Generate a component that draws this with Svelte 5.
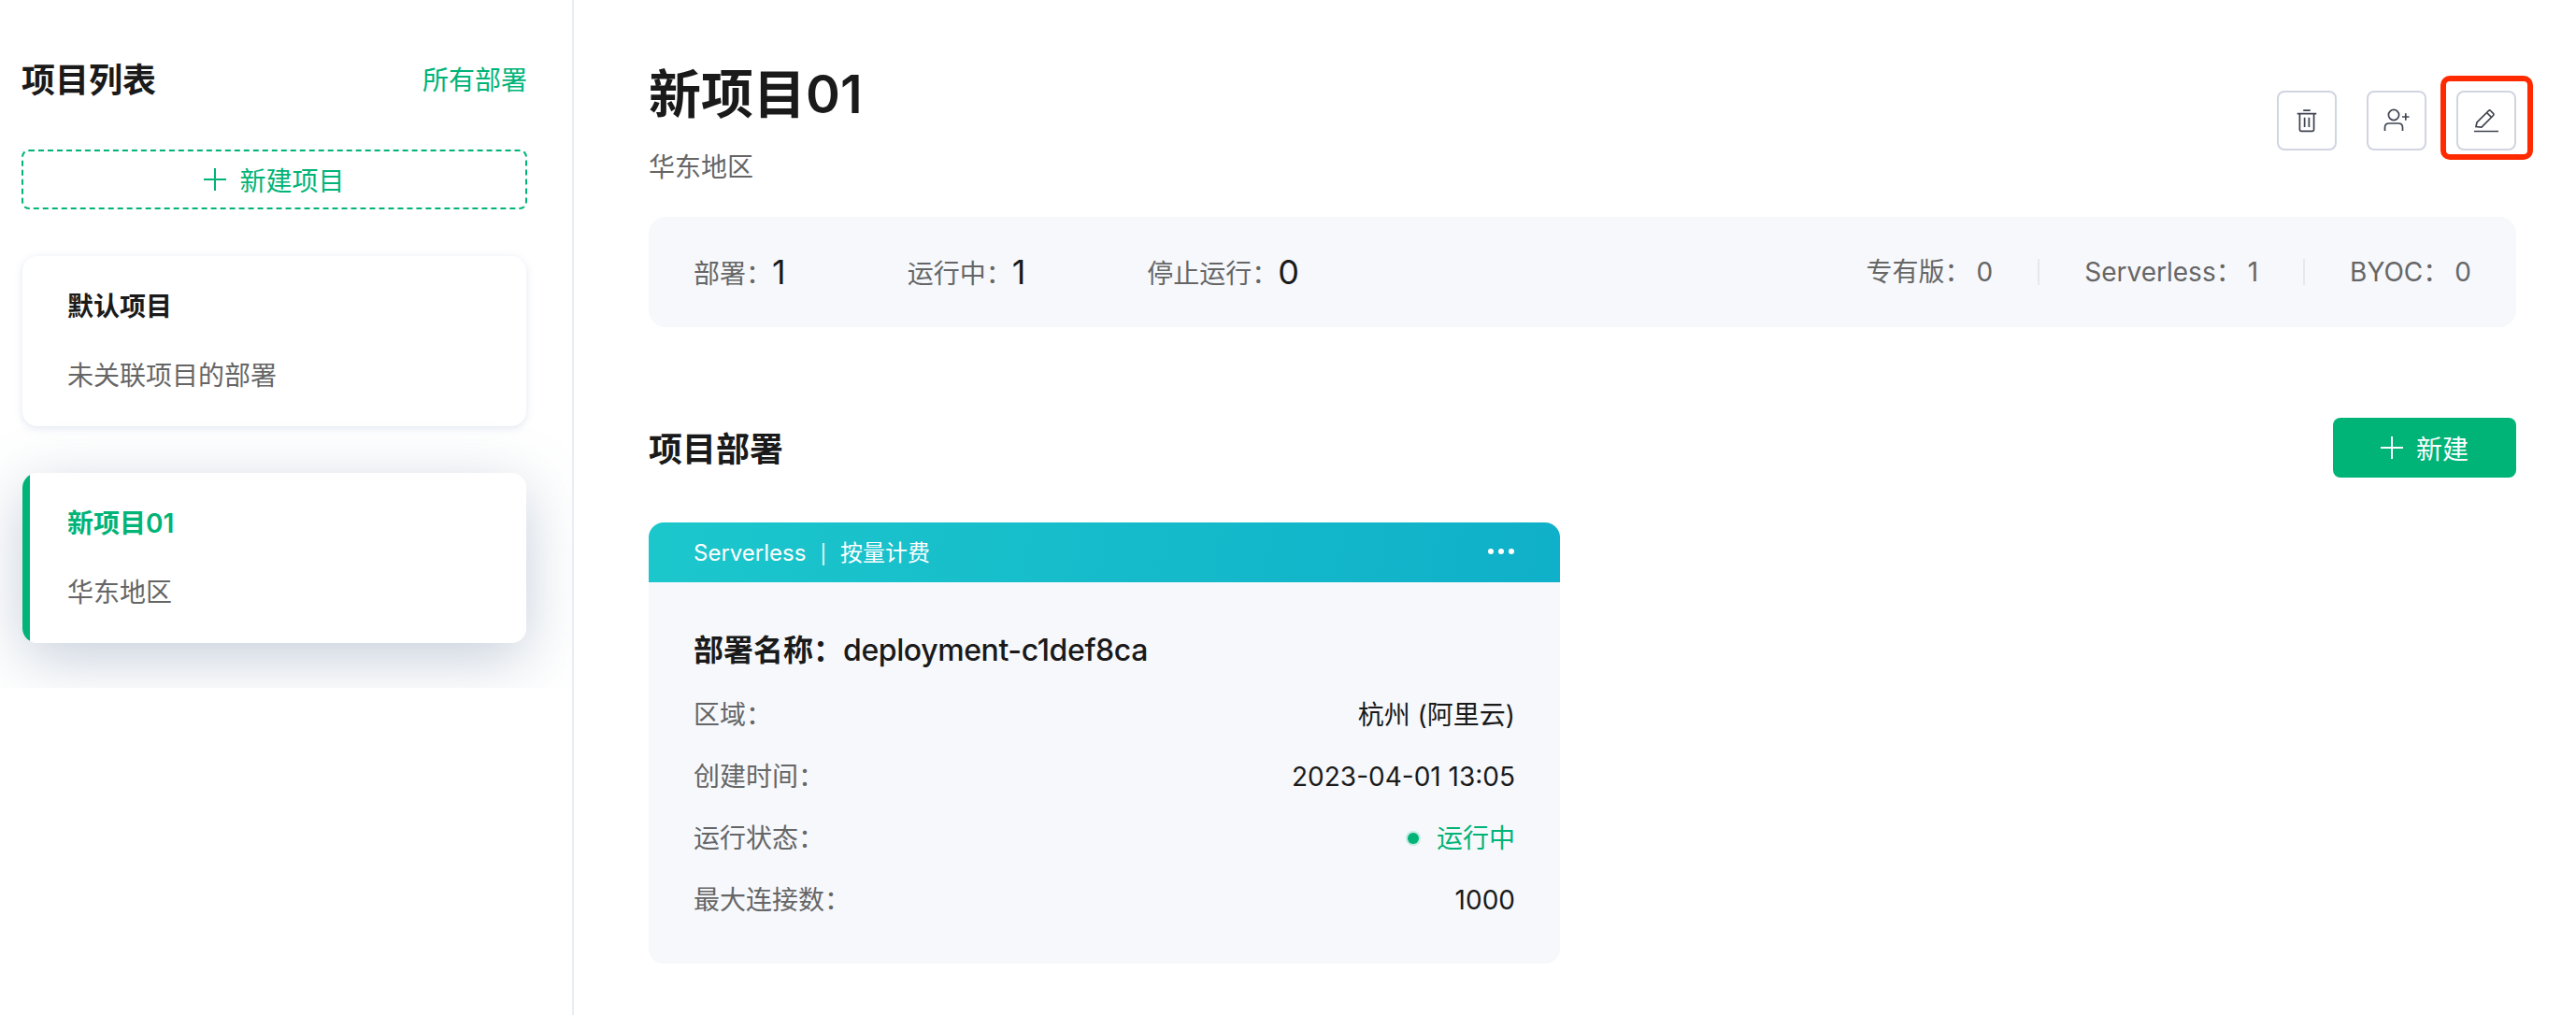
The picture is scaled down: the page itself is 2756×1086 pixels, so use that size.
<script lang="ts">
  const stats = [
    { label: '部署：', value: 1 },
    { label: '运行中：', value: 1 },
    { label: '停止运行：', value: 0 }
  ];
  const kinds = [
    { label: '专有版：', value: 0 },
    { label: 'Serverless：', value: 1 },
    { label: 'BYOC：', value: 0 }
  ];
</script>

{#snippet plus()}
  <svg class="plus" viewBox="0 0 24 24" width="24" height="24" fill="none" stroke="currentColor" stroke-width="2">
    <path d="M12 0v24M0 12h24" />
  </svg>
{/snippet}

<div class="page">
  <aside class="sidebar">
    <div class="side-head">
      <h2>项目列表</h2>
      <span class="link">所有部署</span>
    </div>
    <button class="add-project">{@render plus()}新建项目</button>
    <div class="project-list">
      <div class="project">
        <div class="project-name">默认项目</div>
        <div class="project-desc">未关联项目的部署</div>
      </div>
      <div class="project active">
        <div class="project-name">新项目01</div>
        <div class="project-desc">华东地区</div>
      </div>
    </div>
  </aside>

  <main class="content">
    <header class="top">
      <div>
        <h1>新项目01</h1>
        <div class="region">华东地区</div>
      </div>
      <div class="actions">
        <button class="icon-btn" aria-label="删除">
          <svg viewBox="0 0 24 24" width="26" height="26" fill="none" stroke="#3f4450" stroke-width="1.6">
            <path d="M2.5 5.2h19M8.5 2h7M5 5.2V21q0 1.5 1.500 1.500h11q1.500 0 1.500-1.500V5.200M9.800 9v9.500M14.200 9v9.500" />
          </svg>
        </button>
        <button class="icon-btn" aria-label="添加成员">
          <svg viewBox="0 0 28 28" width="28" height="28" fill="none" stroke="#3f4450" stroke-width="1.700">
            <circle cx="11" cy="8" r="5.600" />
            <path d="M1.500 25v-3.500q0-4.500 4.500-4.500h10q4.500 0 4.500 4.500V25M20 10h7.500M23.800 6.200v7.500" />
          </svg>
        </button>
        <div class="edit-wrap">
          <button class="icon-btn" aria-label="编辑">
            <svg viewBox="0 0 28 28" width="28" height="28" fill="none" stroke="#3f4450" stroke-width="1.700">
              <path d="M3 20.500 4 16 16.500 3.500a1.500 1.500 0 0 1 2.100 0l2.900 2.900a1.500 1.500 0 0 1 0 2.100L9 21Z" />
              <path d="M14.500 5.500l5 5M1 25.500h26" />
            </svg>
          </button>
          <span class="highlight"></span>
        </div>
      </div>
    </header>

    <section class="summary">
      <div class="stats">
        {#each stats as s}
          <div class="stat"><span class="stat-label">{s.label}</span><span class="stat-value">{s.value}</span></div>
        {/each}
      </div>
      <div class="kinds">
        {#each kinds as k}
          <div class="kind"><span>{k.label}</span><span class="kind-value">{k.value}</span></div>
        {/each}
      </div>
    </section>

    <div class="section-head">
      <h3>项目部署</h3>
      <button class="add-btn">{@render plus()}新建</button>
    </div>

    <article class="deploy">
      <div class="deploy-head">
        <span>Serverless<i>|</i>按量计费</span>
        <span class="dots"><b></b><b></b><b></b></span>
      </div>
      <div class="deploy-body">
        <div class="deploy-name">部署名称：<span>deployment-c1def8ca</span></div>
        <div class="row"><span class="key">区域：</span><span>杭州 (阿里云)</span></div>
        <div class="row"><span class="key">创建时间：</span><span>2023-04-01 13:05</span></div>
        <div class="row"><span class="key">运行状态：</span><span class="running"><em></em>运行中</span></div>
        <div class="row"><span class="key">最大连接数：</span><span>1000</span></div>
      </div>
    </article>
  </main>
</div>

<style>
  :global(body) {
    margin: 0;
    background: #fff;
    font-family: Inter, "Noto Sans CJK SC", sans-serif;
    color: #1a1a1a;
  }

  button { font-family: inherit; cursor: pointer; }
  h1, h2, h3 { margin: 0; }

  .page { display: flex; height: 1086px; overflow: hidden; }

  .sidebar {
    width: 612px;
    flex: none;
    box-sizing: content-box;
    border-right: 2px solid #e8edf5;
  }

  .side-head {
    display: flex;
    align-items: center;
    justify-content: space-between;
    height: 44px;
    margin: 62px 48px 0 23px;
  }

  .side-head h2 { font-size: 36px; font-weight: 600; position: relative; top: -1px; }
  .link { font-size: 28px; color: #00b377; }

  .add-project {
    display: flex;
    align-items: center;
    justify-content: center;
    gap: 14px;
    width: 541px;
    height: 64px;
    margin: 54px 0 0 23px;
    border: 2px dashed #00b377;
    border-radius: 8px;
    background: #fff;
    color: #00b377;
    font-size: 28px;
  }

  .project-list {
    display: flex;
    flex-direction: column;
    gap: 50px;
    height: 512px;
    padding: 50px 49px 0 24px;
    box-sizing: border-box;
    overflow: hidden;
  }

  .project {
    flex: none;
    height: 182px;
    padding: 34px 48px 0;
    box-sizing: border-box;
    border-radius: 16px;
    background: #fff;
    box-shadow: 0 2px 8px rgba(190, 200, 225, 0.45);
  }

  .project.active {
    background: linear-gradient(90deg, #00b377 8px, #fff 8px);
    box-shadow: 0 16px 64px rgba(120, 140, 170, 0.42);
  }

  .project-name { font-size: 28px; font-weight: 600; line-height: 40px; }
  .project-desc { margin-top: 34px; font-size: 28px; line-height: 40px; color: #666; }
  .active .project-name { color: #00b377; }

  .content { flex: 1; min-width: 0; padding: 0 64px 0 80px; }

  .top { display: flex; justify-content: space-between; height: 232px; }

  h1 { margin-top: 66px; font-size: 56px; line-height: 70px; font-weight: 600; }
  .region { margin-top: 23px; font-size: 28px; line-height: 40px; color: #666; }

  .actions { display: flex; gap: 32px; margin-top: 97px; }

  .icon-btn {
    display: flex;
    align-items: center;
    justify-content: center;
    width: 64px;
    height: 64px;
    padding: 0;
    border: 2px solid #d0d5e0;
    border-radius: 8px;
    background: #fff;
  }

  .edit-wrap { position: relative; height: 64px; }

  .highlight {
    position: absolute;
    left: -17px;
    top: -16px;
    width: 99px;
    height: 90px;
    box-sizing: border-box;
    border: 6px solid #ff2a00;
    border-radius: 10px;
  }

  .summary {
    display: flex;
    align-items: center;
    justify-content: space-between;
    height: 118px;
    padding: 0 48px;
    border-radius: 18px;
    background: #f6f8fc;
  }

  .stats { display: flex; gap: 130px; }
  .stat { display: flex; align-items: center; }
  .stat-label { font-size: 28px; color: #666; }
  .stat-value { font-size: 36px; line-height: 44px; }

  .kinds { display: flex; font-size: 28px; color: #666; }
  .kind { display: flex; align-items: center; line-height: 28px; padding: 0 48px; border-left: 2px solid #e6e8ee; }
  .kind:first-child { border-left: 0; }
  .kind:last-child { padding-right: 0; }
  .kind-value { margin-left: 6px; }

  .section-head {
    display: flex;
    align-items: center;
    justify-content: space-between;
    margin-top: 96px;
    padding-top: 1px;
  }

  .section-head h3 { font-size: 36px; font-weight: 600; position: relative; top: -1px; }

  .add-btn {
    display: flex;
    align-items: center;
    justify-content: center;
    gap: 14px;
    width: 196px;
    height: 64px;
    border: 0;
    border-radius: 8px;
    background: #00b377;
    color: #fff;
    font-size: 28px;
  }

  .deploy { width: 975px; margin-top: 48px; border-radius: 16px; overflow: hidden; background: #f6f8fc; }

  .deploy-head {
    display: flex;
    align-items: center;
    justify-content: space-between;
    height: 64px;
    padding: 0 48px 3px;
    box-sizing: border-box;
    background: linear-gradient(100deg, #1cc7cc, #0fb0c9);
    color: #fff;
    font-size: 24px;
  }

  .deploy-head i { margin: 0 15px; font-size: 20px; font-style: normal; }
  .dots { display: flex; gap: 5px; margin-right: 1px; }
  .dots b { width: 6px; height: 6px; border-radius: 50%; background: #fff; }

  .deploy-body { height: 408px; padding: 51px 48px 0; box-sizing: border-box; }

  .deploy-name { font-size: 32px; line-height: 44px; font-weight: 600; margin-bottom: 24px; }
  .deploy-name span { font-weight: 500; letter-spacing: -0.4px; }

  .row {
    display: flex;
    align-items: flex-start;
    justify-content: space-between;
    height: 66px;
    line-height: 40px;
    font-size: 28px;
    padding-top: 3px;
    box-sizing: border-box;
  }

  .key { color: #666; }
  .running { display: flex; align-items: center; color: #00b377; }
  .running em {
    width: 12px;
    height: 12px;
    margin-right: 19px;
    border-radius: 50%;
    background: #00b377;
    box-shadow: 0 0 0 2px rgba(0, 179, 119, 0.2);
  }
</style>
